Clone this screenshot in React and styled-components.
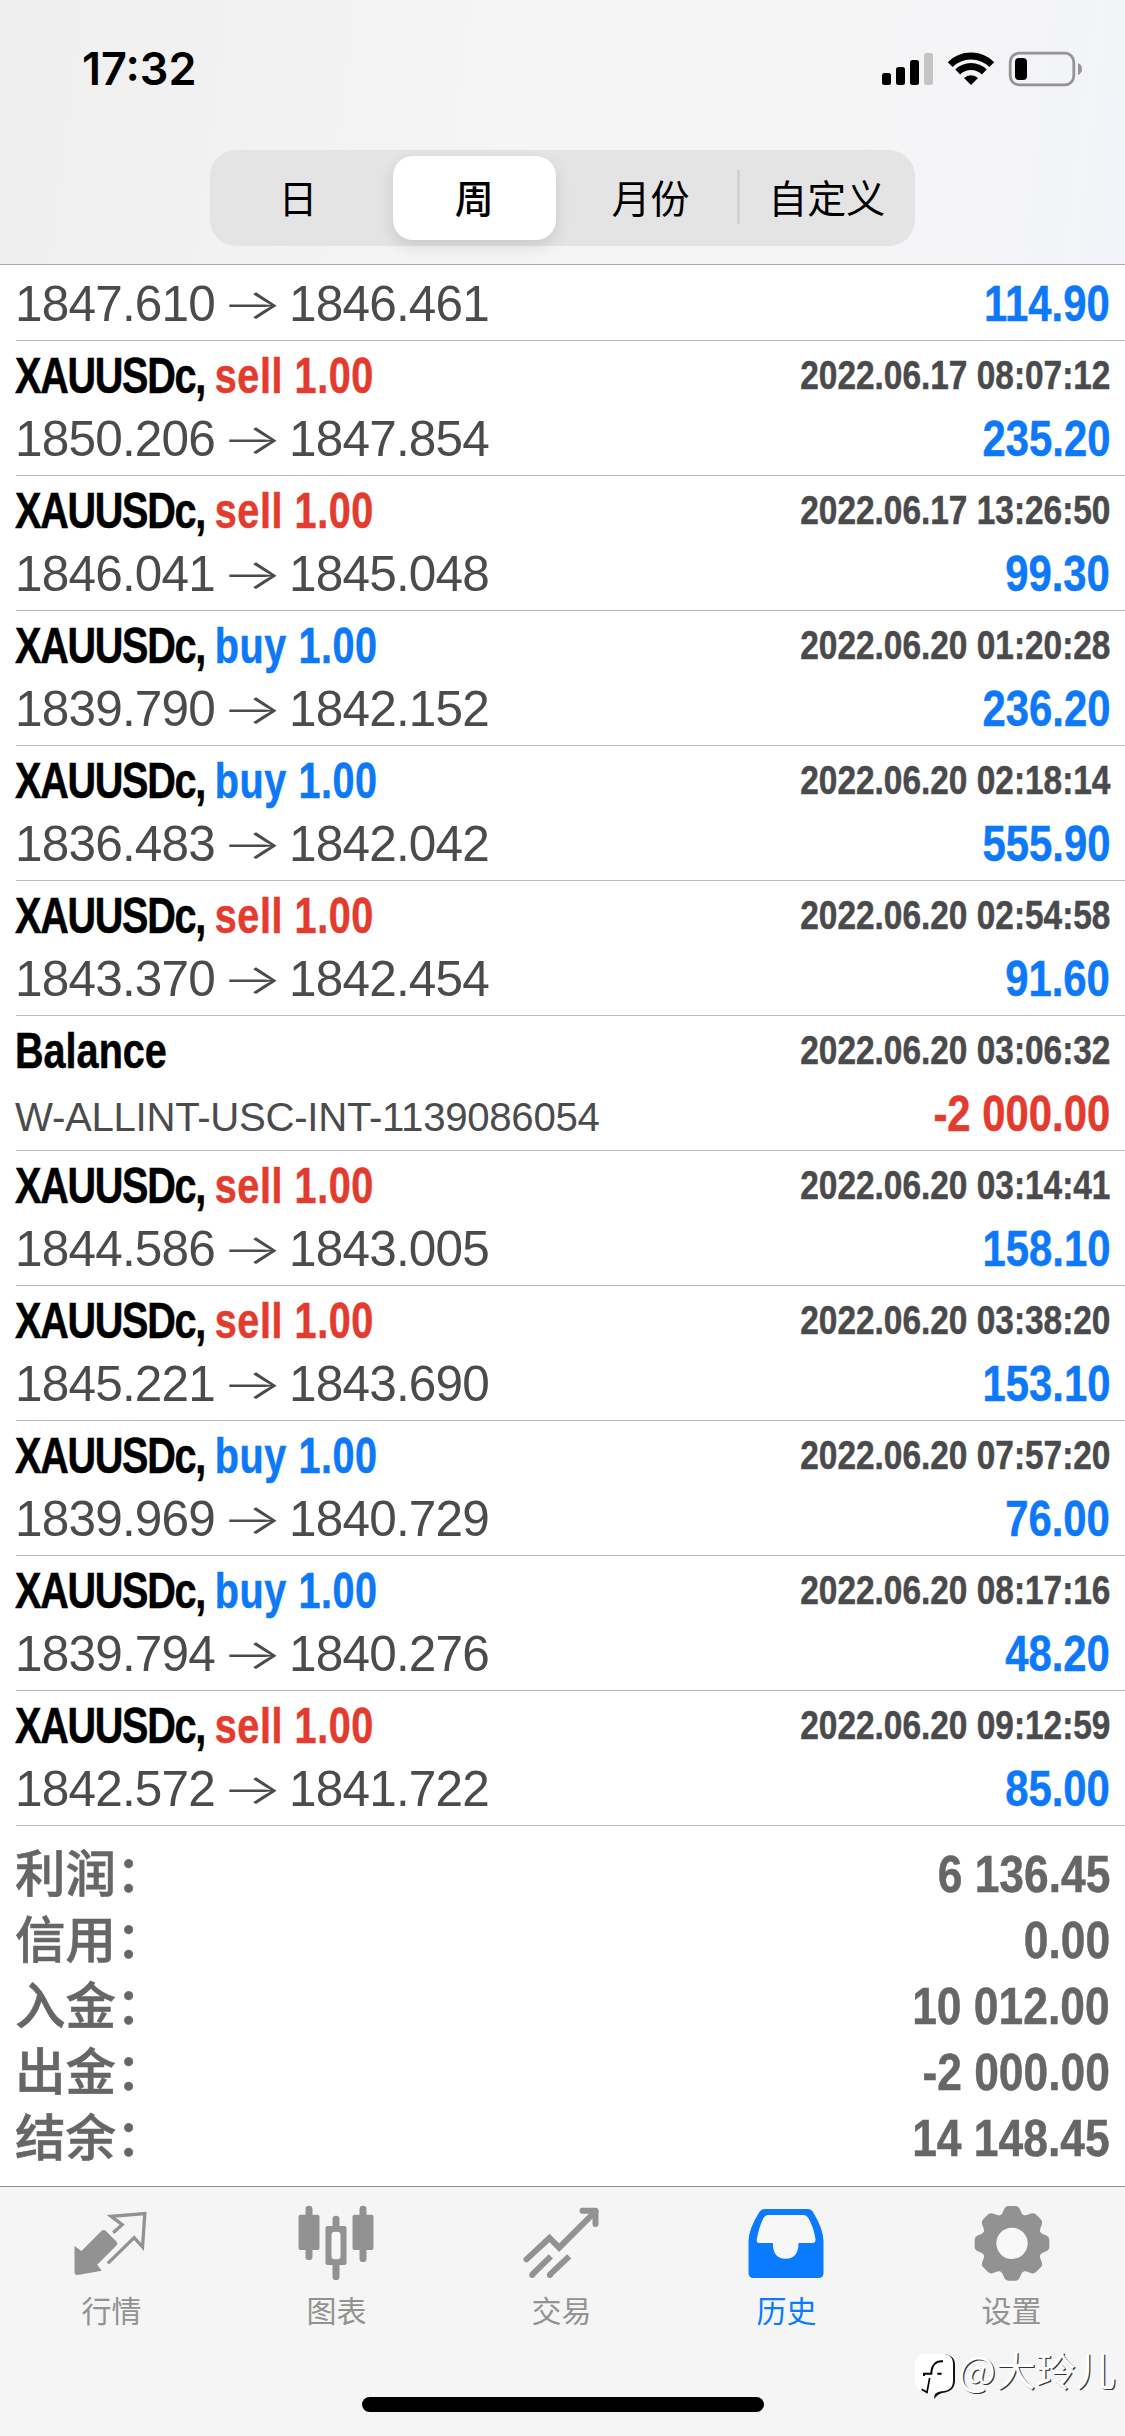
import styled, { createGlobalStyle } from "styled-components";

const GlobalStyle = createGlobalStyle`
    * {
        box-sizing: border-box;
    }
    body {
        margin: 0;
        background-color: white;
    }
`;
const Screen = styled.div`
    width: 1125px;
    height: 2436px;
    display: flex;
    flex-direction: column;
    position: relative;
    overflow: hidden;
    background-color: white;
    font-family: "Liberation Sans", "Noto Sans CJK SC", sans-serif;
`;
const Header = styled.header`
    height: 265px;
    flex: none;
    border-bottom: 1px solid #a9a9a9;
    background: linear-gradient(97deg, #efeff0 0%, #f3f2f3 25%, #f5f5f5 45%, #f5f5f6 75%, #f3f4f9 100%);
`;
const StatusBar = styled.div`
    height: 150px;
    padding: 0 43px 12px 82px;
    display: flex;
    justify-content: space-between;
    align-items: center;
`;
const Clock = styled.div`
    font-family: "Inter", sans-serif;
    font-size: 45px;
    font-weight: 600;
    line-height: 60px;
`;
const StatusIcons = styled.div`
    display: flex;
    align-items: center;
`;
const Segments = styled.div`
    width: 705px;
    height: 96px;
    margin: 0 auto;
    border-radius: 26px;
    display: flex;
    background-color: #e5e4e5;
`;
const Segment = styled.div`
    flex: 1;
    margin: 6px 7px;
    padding-bottom: 5px;
    display: flex;
    justify-content: center;
    align-items: center;
    font-family: "Noto Sans CJK SC", sans-serif;
    font-size: 39px;
    line-height: 60px;
    white-space: nowrap;
    font-weight: ${(props) => (props.$active ? 500 : 400)};
    border-radius: 20px;
    background-color: ${(props) => (props.$active ? "white" : "transparent")};
    box-shadow: ${(props) => (props.$active ? "0 6px 16px rgba(0,0,0,0.12)" : "none")};
`;
const Divider = styled.div`
    width: 3px;
    height: 54px;
    margin: 20px -1px 0 -2px;
    background-color: #d2d2d4;
`;
const List = styled.main`
    flex: none;
`;
const Row = styled.div`
    height: ${(props) => (props.$clipped ? 76 : 135)}px;
    margin-left: 16px;
    padding: 0 15px 4px 0;
    border-bottom: 1px solid #bababc;
    display: flex;
    flex-direction: column;
    justify-content: flex-end;
`;
const TitleLine = styled.div`
    height: 62px;
    display: flex;
    justify-content: space-between;
    align-items: flex-start;
    white-space: pre;
    line-height: 61px;
`;
const PriceLine = styled.div`
    height: 64px;
    display: flex;
    justify-content: space-between;
    align-items: baseline;
    white-space: pre;
    line-height: 64px;
`;
const Condensed = styled.div`
    font-weight: bold;
    -webkit-text-stroke: 0.5px currentColor;
    transform-origin: right center;
`;
const Symbol = styled(Condensed)`
    margin-left: -1px;
    font-size: 49.5px;
    transform: scaleX(0.8);
    transform-origin: left center;
    color: black;
`;
const Ticker = styled.span`
    letter-spacing: -1.6px;
`;
const Deal = styled.span`
    letter-spacing: 0.7px;
    color: ${(props) => (props.$side === "buy" ? "#0d79f7" : "#e33b2e")};
`;
const DateTime = styled(Condensed)`
    font-size: 40px;
    line-height: 60px;
    transform: scaleX(0.835);
    color: #4a4a4c;
`;
const Prices = styled.div`
    margin-left: -1px;
    font-size: 49.5px;
    letter-spacing: -0.8px;
    color: #4b4b4e;
`;
const Arrow = styled.span`
    display: inline-flex;
    justify-content: center;
    width: 48px;
    font-family: "Inter", sans-serif;
    font-size: 42px;
    font-weight: 300;
    letter-spacing: 0;
    transform: scaleX(1.54) translateY(-2px);
`;
const Comment = styled.div`
    margin-left: -1px;
    font-size: 40.2px;
    letter-spacing: -0.3px;
    color: #4b4b4e;
`;
const Profit = styled(Condensed)`
    font-size: 49.5px;
    transform: scaleX(0.845);
    color: ${(props) => (props.$loss ? "#e33b2e" : "#0d79f9")};
`;
const Summary = styled.section`
    flex: 1;
    padding: 11px 15px 0 15px;
`;
const SummaryRow = styled.div`
    height: 66px;
    display: flex;
    justify-content: space-between;
    align-items: baseline;
    line-height: 66px;
    color: #666666;
`;
const SummaryLabel = styled.div`
    font-family: "Noto Sans CJK SC", sans-serif;
    font-size: 50.5px;
    font-weight: 500;
    -webkit-text-stroke: 0.6px currentColor;
`;
const SummaryValue = styled(Condensed)`
    font-size: 52.5px;
    transform: scaleX(0.845);
`;
const TabBar = styled.nav`
    height: 250px;
    flex: none;
    border-top: 1px solid #8c8c8c;
    background-color: #f5f5f5;
    display: flex;
    flex-direction: column;
    align-items: center;
`;
const Tabs = styled.div`
    width: 100%;
    height: 210px;
    display: flex;
`;
const Tab = styled.div`
    flex: 1;
    padding: 17px 2px 0 0;
    display: flex;
    flex-direction: column;
    align-items: center;
    color: ${(props) => (props.$active ? "#0a7aff" : "#929292")};
`;
const TabIcon = styled.svg`
    width: 78px;
    height: 78px;
    fill: currentColor;
`;
const TabLabel = styled.div`
    margin-top: 7px;
    font-family: "Noto Sans CJK SC", sans-serif;
    font-size: 30px;
    line-height: 40px;
`;
const HomeIndicator = styled.div`
    width: 402px;
    height: 15px;
    border-radius: 8px;
    background-color: black;
`;
const Watermark = styled.div`
    position: absolute;
    left: 914px;
    top: 2342px;
    display: flex;
    align-items: flex-start;
    color: white;
    font-family: "Noto Sans CJK SC", sans-serif;
    font-size: 40px;
    line-height: 54px;
    text-shadow: 1.2px 1.2px 0 #333333;
`;
const WatermarkLogo = styled.svg`
    width: 44px;
    height: 50px;
    margin-top: 8px;
`;

const deals = [
    { prices: ["1847.610", "1846.461"], profit: "114.90" },
    { side: "sell", date: "2022.06.17 08:07:12", prices: ["1850.206", "1847.854"], profit: "235.20" },
    { side: "sell", date: "2022.06.17 13:26:50", prices: ["1846.041", "1845.048"], profit: "99.30" },
    { side: "buy", date: "2022.06.20 01:20:28", prices: ["1839.790", "1842.152"], profit: "236.20" },
    { side: "buy", date: "2022.06.20 02:18:14", prices: ["1836.483", "1842.042"], profit: "555.90" },
    { side: "sell", date: "2022.06.20 02:54:58", prices: ["1843.370", "1842.454"], profit: "91.60" },
    { date: "2022.06.20 03:06:32", comment: "W-ALLINT-USC-INT-1139086054", profit: "-2 000.00" },
    { side: "sell", date: "2022.06.20 03:14:41", prices: ["1844.586", "1843.005"], profit: "158.10" },
    { side: "sell", date: "2022.06.20 03:38:20", prices: ["1845.221", "1843.690"], profit: "153.10" },
    { side: "buy", date: "2022.06.20 07:57:20", prices: ["1839.969", "1840.729"], profit: "76.00" },
    { side: "buy", date: "2022.06.20 08:17:16", prices: ["1839.794", "1840.276"], profit: "48.20" },
    { side: "sell", date: "2022.06.20 09:12:59", prices: ["1842.572", "1841.722"], profit: "85.00" },
];

const totals = [
    ["利润：", "6 136.45"],
    ["信用：", "0.00"],
    ["入金：", "10 012.00"],
    ["出金：", "-2 000.00"],
    ["结余：", "14 148.45"],
];

function DealRow({ side, date, prices, comment, profit }) {
    return <Row $clipped={!date}>
        {date && <TitleLine>
            {side
                ? <Symbol><Ticker>XAUUSDc, </Ticker><Deal $side={side}>{side} 1.00</Deal></Symbol>
                : <Symbol>Balance</Symbol>}
            <DateTime>{date}</DateTime>
        </TitleLine>}
        <PriceLine>
            {comment
                ? <Comment>{comment}</Comment>
                : <Prices>{prices[0]} <Arrow>→</Arrow> {prices[1]}</Prices>}
            <Profit $loss={profit.startsWith("-")}>{profit}</Profit>
        </PriceLine>
    </Row>
}

function QuotesIcon() {
    return <TabIcon viewBox="220.5 102 234 234">
        <path d="M225 228 L246 243 L305 184 Q312 176 320 184 L350 214 Q357 221 350 227 L293 284 L307 302 L235 315 Q225 316 225 306 Z" />
        <path d="M341 188 L368 164 L335 139 L436 131 L429 231 L404 203 L325 280" fill="none" stroke="currentColor" strokeWidth="10" />
    </TabIcon>
}

function ChartIcon() {
    return <TabIcon viewBox="895.5 102 234 234">
        <rect x="918" y="107" width="21" height="163" rx="10" />
        <rect x="897" y="134" width="63" height="106" rx="6" />
        <rect x="1080" y="107" width="21" height="169" rx="10" />
        <rect x="1059" y="134" width="63" height="106" rx="6" />
        <rect x="999" y="137" width="21" height="193" rx="10" />
        <rect x="978" y="168" width="63" height="117" rx="6" />
        <rect x="996" y="185" width="27" height="83" rx="10" fill="#f8f8f8" />
    </TabIcon>
}

function TradeIcon() {
    return <TabIcon viewBox="370.5 102 234 234">
        <g fill="none" stroke="currentColor" strokeWidth="18">
            <path d="M381 268 L450 204 L479 233 L588 124" strokeLinecap="round" />
            <path d="M549 122 H588 V162" strokeLinecap="round" strokeLinejoin="round" />
            <path d="M454 259 L398 314" />
            <path d="M509 259 L451 314" />
        </g>
        <circle cx="398" cy="315" r="9" />
        <circle cx="451" cy="315" r="9" />
    </TabIcon>
}

function HistoryIcon() {
    return <TabIcon viewBox="70.5 102 234 234">
        <path d="M121 117 H249 Q260 117 266 127 Q297 178 297 214 V309 Q297 324 282 324 H87 Q72 324 72 309 V214 Q72 178 104 127 Q110 117 121 117 Z" />
        <path d="M132 135 H237 Q246 135 251 143 Q267 170 273 207 Q274 219 264 219 H222 Q222 266 183 266 Q145 266 145 219 H106 Q95 219 97 207 Q104 170 117 144 Q122 135 132 135 Z" fill="#f7f7f7" />
    </TabIcon>
}

function SettingsIcon() {
    const teeth = [0, 45, 90, 135, 180, 225, 270, 315];
    return <TabIcon viewBox="743 102 234 234">
        <circle cx="860" cy="220" r="91" />
        {teeth.map((angle) => <path
            key={angle}
            d="M814 142 Q830 137 835 121 Q839 108 850 108 H870 Q881 108 885 121 Q890 137 906 142 Z"
            transform={`rotate(${angle} 860 220)`}
        />)}
        <circle cx="860" cy="220" r="47" fill="#f8f8f8" />
    </TabIcon>
}

function SignalIcons() {
    return <StatusIcons>
        <svg width="201" height="36" viewBox="881 51 201 36">
            <rect x="882" y="73" width="9" height="12" rx="2.5" />
            <rect x="896" y="67" width="9" height="18" rx="2.5" />
            <rect x="910" y="60" width="9" height="25" rx="2.5" />
            <rect x="924" y="53" width="9" height="32" rx="2.5" fill="#c4c4c5" />
            <g fill="none" stroke="black" strokeWidth="6.8">
                <path d="M950.2 64.6 A29.4 29.4 0 0 1 991.8 64.6" />
                <path d="M957.7 72 A18.8 18.8 0 0 1 984.3 72" />
            </g>
            <path d="M971 85 L964 78 A10 10 0 0 1 978 78 Z" />
            <rect x="1010.2" y="53.2" width="63.6" height="31.6" rx="9" fill="none" stroke="#949496" strokeWidth="2.8" />
            <rect x="1015" y="58" width="12" height="22" rx="4" />
            <path d="M1078 63 Q1082 65 1082 69 Q1082 73 1078 75 Z" fill="#949496" />
        </svg>
    </StatusIcons>
}

const tabs = [
    { label: "行情", Icon: QuotesIcon },
    { label: "图表", Icon: ChartIcon },
    { label: "交易", Icon: TradeIcon },
    { label: "历史", Icon: HistoryIcon, active: true },
    { label: "设置", Icon: SettingsIcon },
];

export default function App() {
    return <>
        <GlobalStyle />
        <Screen>
            <Header>
                <StatusBar>
                    <Clock>17:32</Clock>
                    <SignalIcons />
                </StatusBar>
                <Segments>
                    <Segment>日</Segment>
                    <Segment $active>周</Segment>
                    <Segment>月份</Segment>
                    <Divider />
                    <Segment>自定义</Segment>
                </Segments>
            </Header>
            <List>
                {deals.map((deal) => <DealRow key={deal.prices || deal.comment} {...deal} />)}
            </List>
            <Summary>
                {totals.map(([label, value]) => <SummaryRow key={label}>
                    <SummaryLabel>{label}</SummaryLabel>
                    <SummaryValue>{value}</SummaryValue>
                </SummaryRow>)}
            </Summary>
            <TabBar>
                <Tabs>
                    {tabs.map(({ label, Icon, active }) => <Tab key={label} $active={active}>
                        <Icon />
                        <TabLabel>{label}</TabLabel>
                    </Tab>)}
                </Tabs>
                <HomeIndicator />
            </TabBar>
            <Watermark>
                <WatermarkLogo viewBox="27 30 132 150">
                    <path d="M62 42 H116 Q150 44 150 76 V124 Q148 156 112 159 Q98 162 88 177 Q86 158 100 154 L140 130 Z" fill="#111111" />
                    <path d="M62 41 H112 Q144 41 144 73 V122 Q144 152 110 154 Q94 157 88 164 L82 156 H62 Q30 154 30 124 V73 Q30 41 62 41 Z" fill="white" />
                    <path d="M114 64 Q80 62 79 101 H57 V108 M97 101 H110" fill="none" stroke="black" strokeWidth="6" />
                    <path d="M74 114 L66 157 L50 148" fill="none" stroke="black" strokeWidth="5" />
                </WatermarkLogo>
                @大玲儿
            </Watermark>
        </Screen>
    </>
}
